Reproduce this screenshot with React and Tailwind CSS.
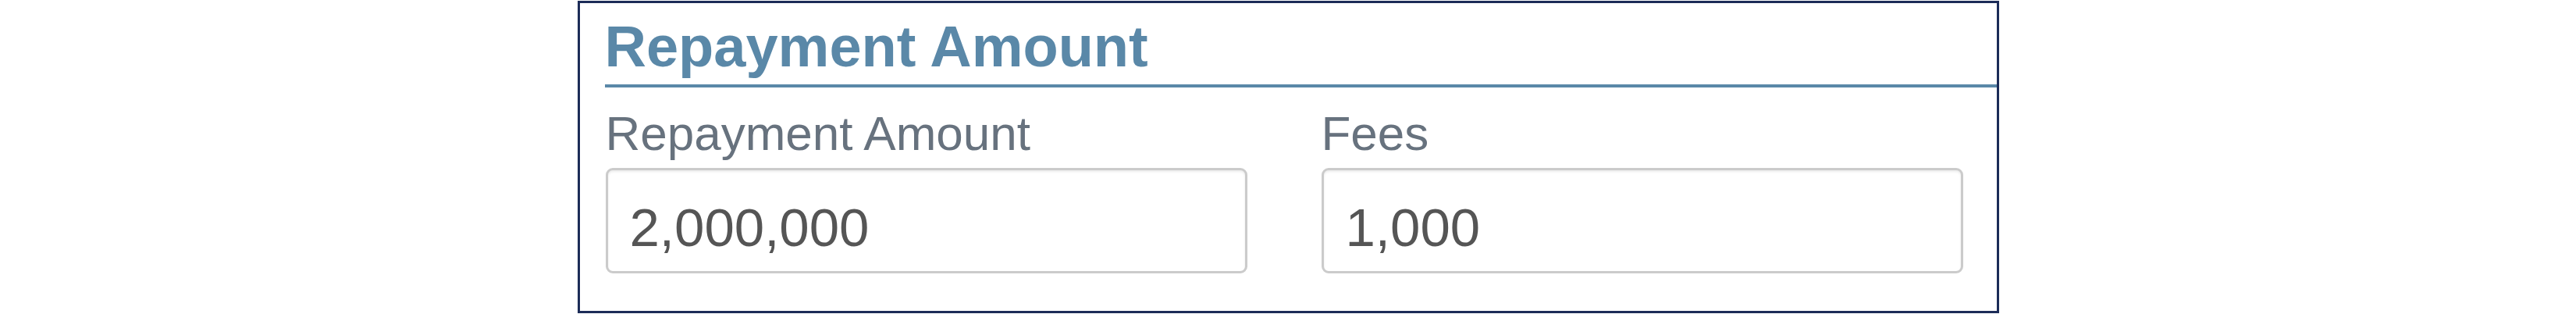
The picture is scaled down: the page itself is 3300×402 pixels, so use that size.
import React from "react";

function Field({ label, value }) {
  return (
    <div className="flex flex-col">
      <label className="block text-[62px] leading-[70px] text-[#67727e] mb-[9px] whitespace-nowrap">
        {label}
      </label>
      <input
        readOnly
        value={value}
        className="box-border h-[135px] w-full rounded-[9px] border-[3px] border-[#cbcbcb] bg-white pl-[28px] pr-[20px] pt-[35px] pb-[18px] text-[69px] leading-[76px] text-[#555555] shadow-[inset_0_2px_3px_rgba(0,0,0,0.08)] outline-none"
        style={{ fontFamily: '"Liberation Sans", Arial, sans-serif' }}
      />
    </div>
  );
}

export default function App() {
  return (
    <div
      className="w-[3300px] h-[402px] bg-white pt-[1px]"
      style={{ fontFamily: '"Liberation Sans", Arial, Helvetica, sans-serif' }}
    >
      <div className="mx-auto box-border h-[400px] w-[1821px] border-[3px] border-[#1c2c58] bg-white">
        <div className="ml-[32px] mt-[16px] border-b-[4px] border-[#5a88a8] pb-[8px]">
          <h2 className="text-[74px] font-bold leading-[80px] text-[#5a88a8] whitespace-nowrap">
            Repayment Amount
          </h2>
        </div>
        <div className="ml-[33px] mr-[43px] mt-[24px] grid grid-cols-2 gap-x-[95px]">
          <Field label="Repayment Amount" value="2,000,000" />
          <Field label="Fees" value="1,000" />
        </div>
      </div>
    </div>
  );
}
